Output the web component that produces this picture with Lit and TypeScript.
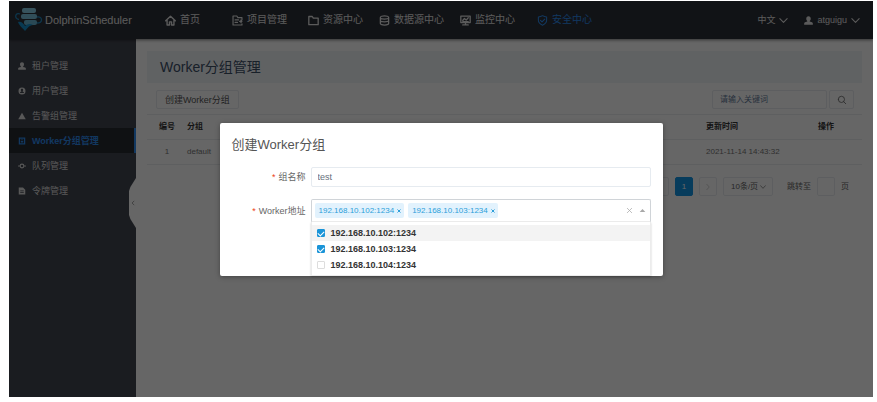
import { LitElement, html, css, svg, TemplateResult } from "lit";
import { customElement, state } from "lit/decorators.js";
import { classMap } from "lit/directives/class-map.js";

const icon = (body: unknown, box = 16) =>
  html`<svg class="icon" viewBox="0 0 ${box} ${box}" aria-hidden="true">${body}</svg>`;

const stroke = (d: string, w = 1.5) =>
  svg`<path d=${d} fill="none" stroke="currentColor" stroke-width=${w} stroke-linecap="round" stroke-linejoin="round"/>`;
const fill = (d: string) => svg`<path d=${d} fill="currentColor" fill-rule="evenodd"/>`;

const userPath =
  "M8 .5c2.600 0 4 1.800 4 4.300 0 1.700-.8 3.200-1.800 4v1l4 1.400c1 .4 1.500 1.100 1.500 2V15.500H.3V13.200c0-.9.5-1.600 1.500-2l4-1.400v-1c-1-.8-1.800-2.300-1.800-4C4 2.300 5.400.5 8 .5z";

const icons: Record<string, TemplateResult> = {
  home: icon(stroke("M1 8.500 8 1.800l7 6.700M3 7.500V14.500h3.500V10h3v4.500H13V7.500", 2)),
  project: icon(stroke("M14.500 7V3.800H8.500L7 1.500H1.500v13h13V13M4.500 7.200h5M4.500 10.800h3.500M11 9.200h3.500M12.800 7.500l1.700 1.700-1.700 1.800", 1.700)),
  folder: icon(stroke("M1.200 14V2.200h5l1.500 2.300h7.100V14z", 1.900)),
  database: icon(stroke("M2 3.500C2 .7 14 .7 14 3.500v9c0 2.800-12 2.800-12 0zM2 4c0 2.500 12 2.500 12 0M2 8c0 2.500 12 2.500 12 0", 1.900)),
  monitor: icon(stroke("M1.200 1.500h13.600v9.500H1.200zM8 11v3.500M4 14.500h8M4 8l2.500-3 2.500 2.500L12 4M4 9.500h8", 1.900)),
  shield: icon(stroke("M8 1c2 1.300 4 1.800 6 1.800v5c0 3.500-2.500 5.700-6 7.200-3.500-1.500-6-3.700-6-7.200v-5c2 0 4-.5 6-1.800zM5 7.800l2.300 2.300 4-4.200")),
  user: icon(fill(userPath)),
  userCircle: icon(fill("M8 1a7 7 0 1 1 0 14A7 7 0 0 1 8 1zm0 2.500c-1.500 0-2.200 1-2.200 2.300 0 1 .4 1.700 1 2.200v.8L4.200 10.500v1.300h7.600v-1.300L9.200 8.800V8c.6-.5 1-1.200 1-2.200C10.200 4.500 9.500 3.500 8 3.500z")),
  warning: icon(fill("M8 1.500 15.500 14.500H.5z")),
  worker: icon(fill("M1.500 1h13v14h-13zM4 3.500v9h8v-9zM5.500 5h5v1.500h-5zM5.500 8h5v3h-5z")),
  queue: icon(stroke("M4.300 8a3.700 3.700 0 1 1 7.400 0 3.700 3.700 0 1 1-7.400 0M1 8h2M13 8h2", 2.200)),
  token: icon(fill("M1.500 1H10l4.500 4.500V15h-13zM4.500 7v1.300h7V7zM4.500 10.500v1.300h7v-1.300z")),
  down: icon(stroke("M1.500 4.500 8 11.500l6.500-7", 1.800)),
  left: icon(stroke("M10.500 3 5.500 8l5 5", 1.800)),
  right: icon(stroke("M5.500 2.500 10.500 8l-5 5.500", 1.300)),
  search: icon(stroke("M2 7a5 5 0 1 1 10 0A5 5 0 1 1 2 7M10.600 10.600 14 14", 1.300)),
  cross: icon(stroke("M3 3l10 10M13 3 3 13", 1.700)),
  tagCross: icon(stroke("M3 3l10 10M13 3 3 13", 4)),
  up: icon(fill("M8 4.500 14.500 11.500h-13z")),
};

const navItems = [
  ["home", "首页"],
  ["project", "项目管理"],
  ["folder", "资源中心"],
  ["database", "数据源中心"],
  ["monitor", "监控中心"],
  ["shield", "安全中心"],
];

const sideItems = [
  ["user", "租户管理"],
  ["userCircle", "用户管理"],
  ["warning", "告警组管理"],
  ["worker", "Worker分组管理"],
  ["queue", "队列管理"],
  ["token", "令牌管理"],
];

@customElement("app-root")
export class AppRoot extends LitElement {
  @state() private addresses = [
    { host: "192.168.10.102:1234", checked: true },
    { host: "192.168.10.103:1234", checked: true },
    { host: "192.168.10.104:1234", checked: false },
  ];

  static styles = css`
    :host {
      display: flex;
      box-sizing: border-box;
      min-height: 100vh;
      padding: 1px 4px 5px 9px;
      background: #fff;
      font: 9px/16px "Liberation Sans", "Noto Sans CJK SC", sans-serif;
      color: #666;
    }
    * { box-sizing: border-box; }
    button, input, select { font: inherit; color: inherit; margin: 0; }
    button { padding: 0; border: 0; background: none; cursor: pointer; }
    a { color: inherit; text-decoration: none; }
    .icon { display: block; flex: none; width: 8px; height: 8px; }

    .frame { position: relative; flex: 1; display: flex; flex-direction: column; min-width: 0; overflow: hidden; background: #fff; }

    .header {
      display: flex; align-items: center; height: 38px; padding-right: 13px;
      background: #2c3037; color: #e4e4e4; box-shadow: 0 1px 3px rgba(0, 0, 0, 0.5); z-index: 1;
    }
    .brand { display: flex; align-items: center; gap: 2px; width: 156px; padding-left: 6px; font-size: 11px; }
    .logo { width: 28px; height: 24px; flex: none; }
    .nav { display: grid; grid-template-columns: 67px 76px 71px 81px 77px 60px; font-size: 10px; }
    .nav a { display: flex; align-items: center; gap: 4px; white-space: nowrap; }
    .nav .icon { width: 11px; height: 11px; }
    .nav .active { color: #2d8cf0; }
    .account { display: flex; gap: 16px; margin-left: auto; }
    .account button { display: flex; align-items: center; gap: 4px; }
    .account .icon { width: 9px; height: 9px; }

    .body { flex: 1; display: flex; }
    .side { position: relative; flex: none; width: 127px; padding-top: 14px; background: #434751; color: #dcdcdc; }
    .side a { display: flex; align-items: center; gap: 6px; height: 25px; padding-left: 9px; }
    .side .active { background: #272b30; color: #2d8cf0; font-weight: bold; border-right: 2px solid #2d8cf0; }
    .fold { position: absolute; right: 0; top: 139px; width: 7px; height: 50px; color: #777; }
    .fold::before {
      content: ""; position: absolute; inset: 0; background: #fff;
      clip-path: polygon(100% 0, 20% 18%, 0 26%, 0 74%, 20% 82%, 100% 100%);
    }
    .fold .icon { position: relative; width: 6px; height: 6px; margin: auto; }

    .main { flex: 1; min-width: 0; padding: 12px 11px; }
    .title { margin: 0; padding: 0 13px; font-size: 14px; line-height: 32px; font-weight: normal; color: #3d5068; background: #f1f4f8; }
    .tools { display: flex; justify-content: space-between; padding: 7px 8px 5px 9px; }
    .box { height: 19px; border: 1px solid #e9ecf0; border-radius: 2px; background: #fff; }
    .create { padding: 0 8px; color: #555; }
    .search { display: flex; gap: 2px; font-size: 8px; }
    .search input { width: 115px; padding: 0 7px; }
    .search input::placeholder { color: #667a99; opacity: 1; }
    .search button { display: flex; align-items: center; justify-content: center; width: 25px; }
    .search .icon { width: 10px; height: 10px; }

    table { width: 100%; border-collapse: collapse; table-layout: fixed; font-size: 8px; }
    th, td { height: 25px; padding: 0; text-align: left; border-top: 1px solid #ebedf0; border-bottom: 1px solid #ebedf0; }
    th { color: #333; }
    td { color: #777; }
    .c-id { width: 40px; text-align: center; }
    .c-time { width: 112px; }
    .c-op { width: 44px; }

    .pages { display: flex; align-items: center; justify-content: flex-end; gap: 6px; padding: 12px 13px 0 0; font-size: 8px; }
    .pages .box { width: 18px; }
    .pages button { display: flex; align-items: center; justify-content: center; color: #bbb; }
    .pages .current { background: #1296e6; border-color: #1296e6; color: #fff; }
    .size { display: flex; align-items: center; position: relative; margin-right: 8px; }
    .pages select.box { width: 50px; padding: 0 7px; appearance: none; }
    .size .icon { position: absolute; right: 7px; width: 6px; height: 6px; pointer-events: none; }

    .mask {
      position: absolute; inset: 0; z-index: 2; display: flex; align-items: flex-start; justify-content: center;
      padding-top: 122px; background: rgba(0, 0, 0, 0.6);
    }
    .dialog {
      width: 90%; max-width: 443px; padding: 12px 12px 54px; border-radius: 2px; background: #fff;
      box-shadow: 0 1px 5px rgba(0, 0, 0, 0.35);
    }
    .dialog h2 { margin: 0 0 12px; font-size: 13px; line-height: 20px; font-weight: normal; color: #555; }
    .row { display: grid; grid-template-columns: 74px 1fr; column-gap: 5px; align-items: center; }
    .row + .row { margin-top: 12px; }
    .label { text-align: right; white-space: nowrap; }
    .label::before { content: "*"; margin-right: 3px; color: #ed4014; }
    .name { width: 100%; height: 20px; padding: 0 6px; border: 1px solid #e6ebf0; border-radius: 2px; color: #66707c; outline: none; }
    .picker { position: relative; }
    .chosen {
      display: flex; align-items: center; gap: 4px; height: 23px; padding: 0 4px 0 3px;
      border: 1px solid #d0d4d8; border-bottom-color: #eee; border-radius: 2px 2px 0 0;
    }
    .tag { display: flex; align-items: center; gap: 3px; height: 15px; padding: 0 3px 0 4px; border-radius: 2px; background: #e2f2fd; color: #2d9fda; font-size: 8px; }
    .tag .icon { width: 4px; height: 4px; }
    .ends { display: flex; align-items: center; gap: 6px; margin-left: auto; color: #a8a8a8; }
    .ends .icon { width: 7px; height: 7px; }
    .list {
      position: absolute; left: 0; right: 0; top: 100%; padding: 3px 0 2px; background: #fff;
      border: 1px solid #ececec; border-top: 0; box-shadow: 0 1px 2px rgba(0, 0, 0, 0.2);
    }
    .option { display: flex; align-items: center; gap: 6px; height: 16px; padding-left: 5px; color: #333; font-weight: bold; }
    .option:first-child { background: #f3f3f3; }
    .option input { appearance: none; display: flex; align-items: center; justify-content: center; width: 8px; height: 8px; border: 1px solid #ddd; border-radius: 1px; background: #fff; }
    .option input:checked { border-color: #1a94d8; background: #1a94d8; }
    .option input:checked::after { content: ""; width: 3px; height: 5px; border: solid #fff; border-width: 0 1px 1px 0; transform: rotate(45deg); margin-bottom: 1px; }
  `;

  private toggle(i: number, checked = !this.addresses[i].checked) {
    this.addresses = this.addresses.map((a, n) => (n === i ? { ...a, checked } : a));
  }

  private clear() {
    this.addresses = this.addresses.map((a) => ({ ...a, checked: false }));
  }

  private header() {
    return html`<header class="header">
      <div class="brand">
        <svg class="logo" viewBox="0 0 28 24" aria-hidden="true">
          <path d="M5 6C0 4-1 11 4 11.500M22 9c6-1 6 6 0 6" fill="none" stroke="#1f86bd" stroke-width="1.300" />
          <rect x="7" y="0" width="14" height="5" rx="2" fill="#8bd0e8" />
          <rect x="6" y="6" width="16" height="5" rx="2" fill="#7cc4df" />
          <rect x="9" y="12" width="13" height="5" rx="2" fill="#69b6d4" />
          <path d="M3 14c3-1 5 1 7 4 2-2 5-3 8-1-3 0-5 2-8 6-2-3-5-4-7-9z" fill="#1490cc" />
        </svg>
        <span>DolphinScheduler</span>
      </div>
      <nav class="nav">
        ${navItems.map(
          ([name, text], i) => html`<a href="#" class=${classMap({ active: i === 5 })}>${icons[name]}<span>${text}</span></a>`
        )}
      </nav>
      <div class="account">
        <button>中文${icons.down}</button>
        <button>${icons.user}atguigu${icons.down}</button>
      </div>
    </header>`;
  }

  private page() {
    return html`<main class="main">
      <h1 class="title">Worker分组管理</h1>
      <div class="tools">
        <button class="box create">创建Worker分组</button>
        <div class="search">
          <input class="box" type="text" placeholder="请输入关键词" aria-label="请输入关键词" />
          <button class="box" type="button">${icons.search}</button>
        </div>
      </div>
      <table>
        <thead>
          <tr><th class="c-id">编号</th><th>分组</th><th class="c-time">更新时间</th><th class="c-op">操作</th></tr>
        </thead>
        <tbody>
          <tr><td class="c-id">1</td><td>default</td><td>2021-11-14 14:43:32</td><td></td></tr>
        </tbody>
      </table>
      <div class="pages">
        <button class="box">${icons.left}</button>
        <button class="box current">1</button>
        <button class="box">${icons.right}</button>
        <span class="size"><select class="box"><option>10条/页</option></select>${icons.down}</span>
        <label for="jump">跳转至</label>
        <input class="box" id="jump" type="text" />
        <span>页</span>
      </div>
    </main>`;
  }

  private dialog() {
    return html`<div class="mask">
      <section class="dialog" role="dialog" aria-labelledby="dialog-title">
        <h2 id="dialog-title">创建Worker分组</h2>
        <div class="row">
          <label class="label" for="name">组名称</label>
          <input class="name" id="name" type="text" value="test" />
        </div>
        <div class="row">
          <span class="label" id="address">Worker地址</span>
          <div class="picker" role="group" aria-labelledby="address">
            <div class="chosen">
              ${this.addresses.map((a, i) =>
                a.checked
                  ? html`<span class="tag">${a.host}<button @click=${() => this.toggle(i, false)}>${icons.tagCross}</button></span>`
                  : null
              )}
              <span class="ends"><button @click=${this.clear}>${icons.cross}</button><button>${icons.up}</button></span>
            </div>
            <div class="list">
              ${this.addresses.map(
                (a, i) => html`<label class="option">
                  <input type="checkbox" .checked=${a.checked} @change=${() => this.toggle(i)} />${a.host}
                </label>`
              )}
            </div>
          </div>
        </div>
      </section>
    </div>`;
  }

  render() {
    return html`<div class="frame">
      ${this.header()}
      <div class="body">
        <aside class="side">
          ${sideItems.map(
            ([name, text], i) => html`<a href="#" class=${classMap({ active: i === 3 })}>${icons[name]}<span>${text}</span></a>`
          )}
          <button class="fold">${icons.left}</button>
        </aside>
        ${this.page()}
      </div>
      ${this.dialog()}
    </div>`;
  }
}
